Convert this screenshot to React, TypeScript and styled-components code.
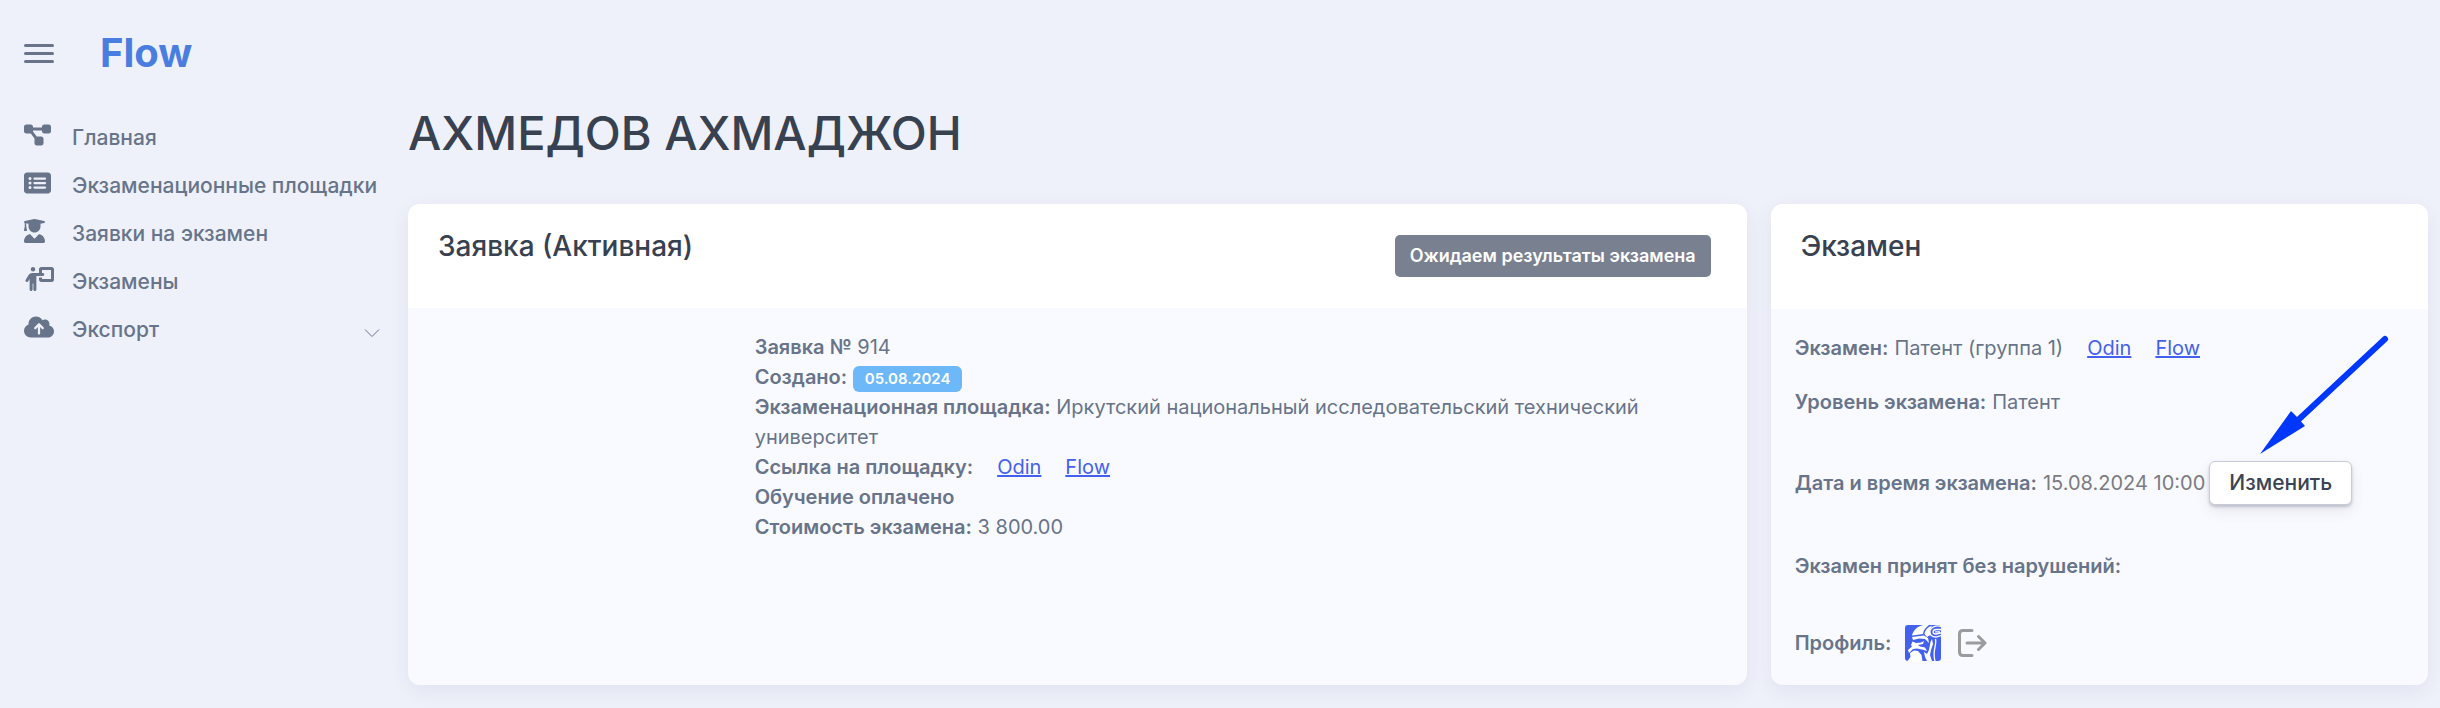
import React from "react";
import styled, { createGlobalStyle } from "styled-components";
import {
  FaDiagramProject,
  FaRectangleList,
  FaUserGraduate,
  FaPersonChalkboard,
  FaCloudArrowUp,
} from "react-icons/fa6";

const GlobalStyle = createGlobalStyle`
  * { box-sizing: border-box; }
  body {
    margin: 0;
    background: #eef1fa;
    color: #677489;
    font-family: Inter, "Noto Sans", sans-serif;
    font-size: 20px;
    line-height: 30px;
  }
  button { font: inherit; cursor: pointer; }
`;

const Page = styled.div`
  display: grid;
  grid-template-columns: 396px minmax(0, 1fr);
  min-height: 100vh;
`;

const Sidebar = styled.aside`
  padding: 24px 16px 24px 24px;
`;

const Brand = styled.div`
  display: flex;
  align-items: center;
  gap: 46px;
  height: 58px;
  margin-bottom: 32px;
`;

const MenuButton = styled.button`
  display: flex;
  flex-direction: column;
  gap: 5px;
  width: 30px;
  padding: 0;
  border: 0;
  background: none;
`;

const Bar = styled.span`
  height: 3px;
  border-radius: 2px;
  background: #677489;
`;

const Logo = styled.a`
  color: #4a7de0;
  font-size: 40px;
  font-weight: 700;
  line-height: 48px;
  text-decoration: none;
`;

const NavItem = styled.a`
  display: flex;
  align-items: center;
  height: 48px;
  color: #677489;
  font-size: 21px;
  font-weight: 500;
  text-decoration: none;
  white-space: nowrap;
`;

const NavIcon = styled.span<{ $width: number }>`
  display: flex;
  flex: none;
  width: 48px;
  padding-bottom: 6px;

  svg {
    width: ${(p) => p.$width}px;
    height: 24px;
  }
`;

const Chevron = styled.svg`
  margin: 6px 0 0 auto;
`;

const Main = styled.main`
  padding: 104px 0 24px;
`;

const Title = styled.h1`
  margin: 0 12px 42px;
  color: #384150;
  font-size: 47px;
  font-weight: 500;
  line-height: 58px;
`;

const Columns = styled.div`
  display: grid;
  grid-template-columns: 2fr 1fr;
`;

const Column = styled.div`
  display: flex;
  min-width: 0;
  padding: 0 12px;
`;

const Card = styled.section`
  flex: 1;
  min-width: 0;
  border-radius: 12px;
  background: #f9faff;
  box-shadow: 0 6px 20px rgba(50, 60, 90, 0.07);
`;

const CardHeader = styled.header<{ $height: number }>`
  display: flex;
  justify-content: space-between;
  align-items: flex-start;
  height: ${(p) => p.$height}px;
  padding: 24px 36px 0 30px;
  border-radius: 12px 12px 0 0;
  background: #fff;
`;

const CardTitle = styled.h2`
  margin: 0;
  color: #384150;
  font-size: 28px;
  font-weight: 500;
  line-height: 36px;
`;

const Status = styled.span`
  margin-top: 7px;
  padding: 6px 15px;
  border-radius: 5px;
  background: #798191;
  color: #fff;
  font-size: 18px;
  font-weight: 600;
`;

const RequestBody = styled.div`
  display: grid;
  grid-template-columns: 1fr 3fr;
  padding-top: 24px;
`;

const RequestInfo = styled.div`
  grid-column: 2;
  padding: 0 12px;
`;

const Label = styled.b`
  font-weight: 600;
`;

const DateBadge = styled.span`
  display: inline-block;
  padding: 0 12px;
  border-radius: 6px;
  background: #6cb8f8;
  color: #fff;
  font-size: 15px;
  font-weight: 600;
  line-height: 26px;
`;

const SiteLink = styled.a`
  margin-left: 24px;
  color: #4361ee;
  text-decoration: underline;
`;

const ExamBody = styled.div`
  padding: 24px;
`;

const Row = styled.div<{ $space?: number }>`
  display: flex;
  align-items: center;
  margin-top: ${(p) => p.$space ?? 0}px;
`;

const Value = styled.span`
  margin-left: 6px;
`;

const Time = styled.span`
  margin: 0 4px 0 6px;
  color: #7c7c7f;
`;

const ChangeWrap = styled.div`
  position: relative;
  display: flex;
`;

const ChangeButton = styled.button`
  height: 44px;
  padding: 0 19px;
  border: 1px solid #c9ccd8;
  border-radius: 6px;
  background: #fff;
  color: #3b4452;
  font-size: 21px;
  font-weight: 500;
  box-shadow: 0 2px 3px rgba(60, 65, 85, 0.25), 0 6px 14px rgba(60, 65, 85, 0.1);
`;

const Arrow = styled.svg`
  position: absolute;
  left: 50px;
  bottom: 50px;
  pointer-events: none;
`;

const IconLink = styled.a<{ $gap: number }>`
  display: flex;
  margin-left: ${(p) => p.$gap}px;
`;

const NAV = [
  { text: "Главная", Icon: FaDiagramProject, width: 27 },
  { text: "Экзаменационные площадки", Icon: FaRectangleList, width: 27 },
  { text: "Заявки на экзамен", Icon: FaUserGraduate, width: 21 },
  { text: "Экзамены", Icon: FaPersonChalkboard, width: 30 },
  { text: "Экспорт", Icon: FaCloudArrowUp, width: 30, expandable: true },
];

function OdinIcon() {
  return (
    <svg width="36" height="36" viewBox="0 0 36 36" role="img" aria-label="Odin">
      <rect width="36" height="36" rx="3" fill="#4361ee" />
      <g fill="#fff">
        <path d="M7 10C9 5 12 1.500 18 0H24C20 3 18 6 18 9L7.500 10.500Z" />
        <path d="M19.500 9C20 5 23 2 27 .500L25 5L25.500 10L22 12Z" />
        <path d="M7 12L19 10.500L23 13L24 18L20 14L14 13.500L8 15Z" />
        <path d="M7.500 16.500L11 18L16 17.500L19 16L18 19L13 20L15 21.500L20 22.500L22 26L17 24.500L12 23.500L8 24L4 28L3 25L7 21.500L6 20Z" />
        <path d="M5 28L9 25.500L13 26L16.500 30L17.500 36H2.500L5.500 32Z" />
        <path d="M19 27L22 29L24 25L25.500 17L27 14L28 19L26 25L25 30L27 36H22L20 32Z" />
      </g>
      <g fill="none" stroke="#fff" strokeWidth="1.300">
        <path d="M36 1.500C31 0 26 2 25 5.500C24 9.500 27 12 31 12L36 10.500M36 4.500H31C27 5 27 9 31 9L36 8M30 6.800H35" />
        <path d="M30.500 14C32 20 27 26 30 36" />
      </g>
    </svg>
  );
}

export default function App() {
  return (
    <>
      <GlobalStyle />
      <Page>
        <Sidebar>
          <Brand>
            <MenuButton type="button" aria-label="Меню">
              <Bar />
              <Bar />
              <Bar />
            </MenuButton>
            <Logo href="#">Flow</Logo>
          </Brand>
          <nav>
            {NAV.map(({ text, Icon, width, expandable }) => (
              <NavItem href="#" key={text}>
                <NavIcon $width={width}>
                  <Icon />
                </NavIcon>
                {text}
                {expandable && (
                  <Chevron width="16" height="10" viewBox="0 0 16 10" fill="none" stroke="#677489">
                    <path d="M1 1.500L8 8.500L15 1.500" />
                  </Chevron>
                )}
              </NavItem>
            ))}
          </nav>
        </Sidebar>
        <Main>
          <Title>АХМЕДОВ АХМАДЖОН</Title>
          <Columns>
            <Column>
              <Card>
                <CardHeader $height={104}>
                  <CardTitle>Заявка (Активная)</CardTitle>
                  <Status>Ожидаем результаты экзамена</Status>
                </CardHeader>
                <RequestBody>
                  <RequestInfo>
                    <div><Label>Заявка №</Label> 914</div>
                    <div><Label>Создано:</Label> <DateBadge>05.08.2024</DateBadge></div>
                    <div>
                      <Label>Экзаменационная площадка:</Label> Иркутский национальный
                      исследовательский технический университет
                    </div>
                    <div>
                      <Label>Ссылка на площадку:</Label>
                      <SiteLink href="#">Odin</SiteLink>
                      <SiteLink href="#">Flow</SiteLink>
                    </div>
                    <div><Label>Обучение оплачено</Label></div>
                    <div><Label>Стоимость экзамена:</Label> 3 800.00</div>
                  </RequestInfo>
                </RequestBody>
              </Card>
            </Column>
            <Column>
              <Card>
                <CardHeader $height={105}>
                  <CardTitle>Экзамен</CardTitle>
                </CardHeader>
                <ExamBody>
                  <Row>
                    <Label>Экзамен:</Label>
                    <Value>Патент (группа 1)</Value>
                    <SiteLink href="#">Odin</SiteLink>
                    <SiteLink href="#">Flow</SiteLink>
                  </Row>
                  <Row $space={24}>
                    <Label>Уровень экзамена:</Label>
                    <Value>Патент</Value>
                  </Row>
                  <Row $space={44}>
                    <Label>Дата и время экзамена:</Label>
                    <Time>15.08.2024 10:00</Time>
                    <ChangeWrap>
                      <ChangeButton type="button">Изменить</ChangeButton>
                      <Arrow width="132" height="122" viewBox="0 0 132 122">
                        <path d="M126 6L37 89" stroke="#0037ff" strokeWidth="6" strokeLinecap="round" />
                        <path d="M1 121L32 78L38 84L46 93Z" fill="#0037ff" />
                      </Arrow>
                    </ChangeWrap>
                  </Row>
                  <Row $space={46}>
                    <Label>Экзамен принят без нарушений:</Label>
                  </Row>
                  <Row $space={44}>
                    <Label>Профиль:</Label>
                    <IconLink href="#" $gap={14}>
                      <OdinIcon />
                    </IconLink>
                    <IconLink href="#" $gap={16} aria-label="Выйти">
                      <svg width="30" height="30" viewBox="0 0 30 30" fill="none" stroke="#9b9b9e" strokeWidth="3" strokeLinecap="round" strokeLinejoin="round">
                        <path d="M15 2.500H6Q2.500 2.500 2.500 6V24Q2.500 27.500 6 27.500H15M10 15H27M21.500 8.500L28 15L21.500 21.500" />
                      </svg>
                    </IconLink>
                  </Row>
                </ExamBody>
              </Card>
            </Column>
          </Columns>
        </Main>
      </Page>
    </>
  );
}
